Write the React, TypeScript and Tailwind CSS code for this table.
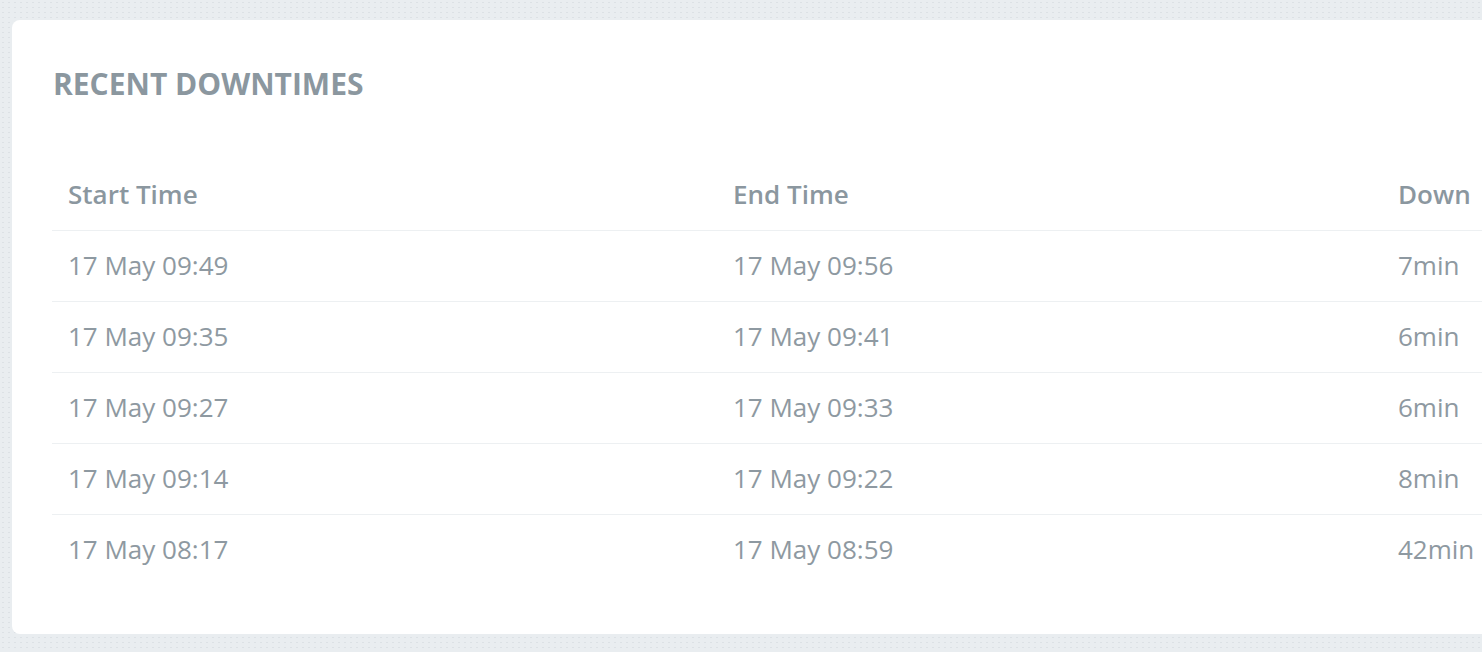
const rows = [
  { start: "17 May 09:49", end: "17 May 09:56", down: "7min" },
  { start: "17 May 09:35", end: "17 May 09:41", down: "6min" },
  { start: "17 May 09:27", end: "17 May 09:33", down: "6min" },
  { start: "17 May 09:14", end: "17 May 09:22", down: "8min" },
  { start: "17 May 08:17", end: "17 May 08:59", down: "42min" },
];

export default function App() {
  return (
    <div className="h-[652px] w-full overflow-hidden bg-[#e9edf0] bg-[radial-gradient(circle,#dce1e5_0.7px,transparent_1px)] bg-[length:6px_5px] pl-3 pt-5 font-['Open_Sans',sans-serif]">
      <div className="w-[2080px] rounded-lg bg-white pl-10 pt-11 pb-[49px]">
        <h2 className="pl-px text-[30px] leading-10 font-bold text-[#8b979f]">RECENT DOWNTIMES</h2>
        <table className="mt-[55px] w-[1995px] table-fixed border-collapse text-left">
          <thead>
            <tr className="h-[71px] border-b border-[#edf0f2]">
              <th className="w-[665px] px-4 text-[26px] font-semibold text-[#8b979f]">Start Time</th>
              <th className="w-[665px] px-4 text-[26px] font-semibold text-[#8b979f]">End Time</th>
              <th className="w-[665px] px-4 text-[26px] font-semibold text-[#8b979f]">Down</th>
            </tr>
          </thead>
          <tbody className="text-[26px] text-[#8e99a1]">
            {rows.map((r) => (
              <tr key={r.start} className="h-[71px] border-b border-[#edf0f2] last:border-0">
                <td className="px-4">{r.start}</td>
                <td className="px-4">{r.end}</td>
                <td className="px-4">{r.down}</td>
              </tr>
            ))}
          </tbody>
        </table>
      </div>
    </div>
  );
}
